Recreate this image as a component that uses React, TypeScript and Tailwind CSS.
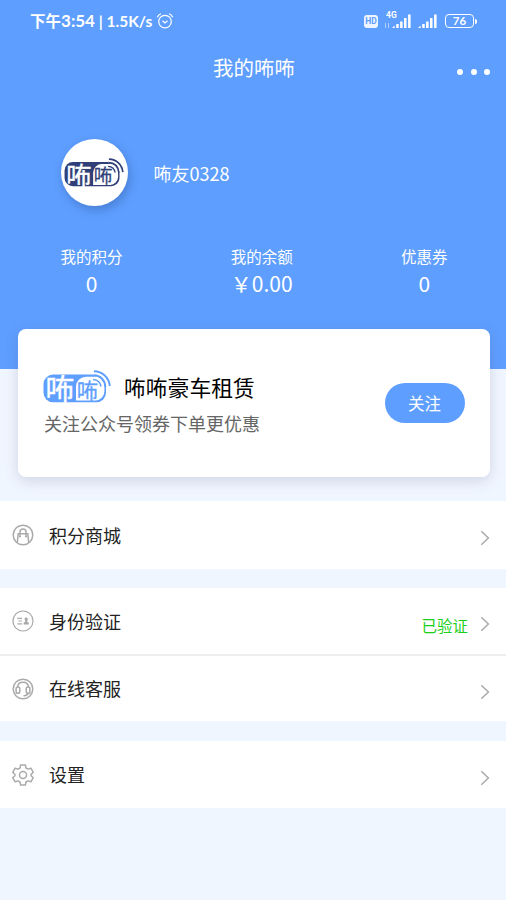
import type { ReactNode } from 'react'

import { clsx } from 'clsx'

type LogoProps = {
  color: string
  className?: string
}

const Logo = ({ color, className }: LogoProps) => (
  <svg viewBox="0 0 68 33" className={clsx('overflow-visible', className)} fill="none">
    <rect x="0.5" y="4.6" width="62.5" height="27.6" rx="9.5" fill={color} />
    <path
      d="M43 6.8H52.5A9.5 9.5 0 0 1 61.4 15.5V21.5A9.5 9.5 0 0 1 52.5 30.6H33V16.5A10 10 0 0 1 43 6.8Z"
      fill="#fff"
    />
    <path d="M50 0H68V17H63.8L50 4.5Z" fill="#fff" />
    <g stroke={color} strokeWidth="1.9">
      <path d="M51 1.2C59.5 1.4 66 7.5 66.8 16" />
      <path d="M50.5 5.3C57.5 5.6 61.7 9.8 62.4 17" />
      <path d="M50 9.6C54.5 9.9 57.3 12.5 58 16.5" strokeWidth="1.5" />
    </g>
    <g className="font-['Noto_Sans_CJK_SC',sans-serif]">
      <text x="2.5" y="30.2" fontSize="29" fill="#fff" stroke="#fff" strokeWidth="0.5">
        咘
      </text>
      <text x="33.8" y="28.8" fontSize="21.5" fill={color} stroke={color} strokeWidth="0.3">
        咘
      </text>
    </g>
  </svg>
)

const AlarmIcon = () => (
  <svg viewBox="0 0 18 18" className="size-[18px]" fill="none" stroke="currentColor" strokeWidth="1.2">
    <circle cx="9" cy="9.6" r="6.3" />
    <path d="M6.5 8.8L9 11L11.5 8.8M1.3 5.2C2 3.5 3.2 2.4 4.9 1.8M16.7 5.2C16 3.5 14.8 2.4 13.1 1.8" />
  </svg>
)

const SignalIcon = ({ className }: { className?: string }) => (
  <svg viewBox="0 0 20 14" className={className} fill="currentColor">
    <path d="M0 14L2.6 11.4V14ZM4.2 10H6.7V14H4.2ZM8.1 7.5H10.6V14H8.1ZM12 4H14.5V14H12ZM16.1 0.5H18.6V14H16.1Z" />
  </svg>
)

const StatusBar = () => (
  <div className="flex h-[42px] items-center justify-between pr-[29px] pl-[30px]">
    <div className="flex items-center">
      <span className="w-[125px] whitespace-nowrap font-['Lato','Noto_Sans_CJK_SC',sans-serif] font-bold text-[15.5px]">
        下午<span className="text-[17px]">3:54</span> | 1.5K/s
      </span>
      <span className="ml-px">
        <AlarmIcon />
      </span>
    </div>
    <div className="flex items-center">
      <span className="mr-[7px] flex h-[13px] w-[14px] items-center justify-center rounded-[3px] bg-white/90 font-['Roboto',sans-serif] font-bold text-[#5e9efe] text-[8.5px]">
        HD
      </span>
      <span className="relative mr-[6px] flex h-[14px] w-[27px] justify-end">
        <span className="-top-[3px] absolute left-[1px] font-['Roboto',sans-serif] font-bold text-[8.5px] leading-[9px]">
          4G
        </span>
        <span className="absolute bottom-0 left-0 h-[5px] w-[4px] border-white/50 border-x" />
        <SignalIcon className="h-[14px] w-[20px]" />
      </span>
      <SignalIcon className="mr-[7px] h-[14px] w-[20px]" />
      <span className="flex h-[14px] w-[29px] items-center justify-center rounded-[4px] border-[1.5px] border-white font-['Lato',sans-serif] font-bold text-[11.5px]">
        76
      </span>
      <span className="ml-[1px] h-[5px] w-[2px] rounded-r-full bg-white" />
    </div>
  </div>
)

const stats = [
  { label: '我的积分', value: '0' },
  { label: '我的余额', value: '￥0.00' },
  { label: '优惠券', value: '0' },
]

const Header = () => (
  <header className="h-[369px] bg-[#5e9efe] text-white">
    <StatusBar />
    <div className="grid h-[50px] grid-cols-[1fr_auto_1fr] items-center pl-[2px]">
      <h1 className="col-start-2 text-[20.5px]">我的咘咘</h1>
      <div className="mt-[9px] mr-[16px] flex gap-[7.5px] justify-self-end">
        <span className="size-[6px] rounded-full bg-white" />
        <span className="size-[6px] rounded-full bg-white" />
        <span className="size-[6px] rounded-full bg-white" />
      </div>
    </div>
    <div className="mt-[47px] flex h-[68px] items-center pl-[60.5px]">
      <div className="mb-px flex size-[67px] items-center justify-center rounded-full bg-white shadow-[2px_4px_10px_rgba(40,80,150,0.4)]">
        <Logo color="#303f78" className="h-[29px] w-[60px]" />
      </div>
      <span className="ml-[26px] text-[18px]">咘友0328</span>
    </div>
    <div className="mt-[38px] flex justify-between pr-[58.5px] pl-[60.5px]">
      {stats.map(({ label, value }) => (
        <div key={label} className="flex flex-col items-center whitespace-nowrap">
          <span className="text-[15.5px] leading-[22px]">{label}</span>
          <span className="mt-[1px] text-[21px] leading-[31px]">{value}</span>
        </div>
      ))}
    </div>
  </header>
)

const FollowCard = () => (
  <section className="relative mx-[18px] mt-[-40px] mr-[16px] flex h-[148px] items-center justify-between rounded-[8px] bg-white pr-[25.5px] pl-[25px] shadow-[0_4px_14px_rgba(90,80,130,0.2)]">
    <div>
      <div className="flex items-center">
        <Logo color="#5e9efe" className="h-[33px] w-[68px]" />
        <h2 className="ml-[13px] text-[21.8px] text-black leading-[34px]">咘咘豪车租赁</h2>
      </div>
      <p className="mt-[5px] pl-px text-[#666] text-[18px] leading-[28px]">关注公众号领券下单更优惠</p>
    </div>
    <button
      type="button"
      className="h-[40px] w-[80px] rounded-full bg-[#5e9efe] text-[16.5px] text-white"
    >
      关注
    </button>
  </section>
)

const BagIcon = () => (
  <>
    <circle cx="11" cy="11" r="9.8" />
    <path d="M5.3 18.8L6.2 9.8H15.8L16.7 18.8M8 12V8A3 3 0 0 1 14 8V12" />
    <path d="M8 12V13.2M14 12V13.2" strokeWidth="2" />
  </>
)

const IdIcon = () => (
  <>
    <circle cx="11" cy="11" r="10" strokeWidth="1.2" />
    <path d="M5.3 8.3H10M6.3 11H10M5.3 13.8H10" strokeWidth="1.2" />
    <path
      d="M11.6 14.6V12.8L13.4 11.6L12.5 9.2C12.5 6.9 15.9 6.9 15.9 9.2L15 11.6L16.8 12.8V14.6Z"
      fill="currentColor"
      stroke="none"
    />
  </>
)

const HeadsetIcon = () => (
  <>
    <circle cx="11" cy="11" r="9.8" />
    <path d="M5.5 9C6.2 2.7 15.8 2.7 16.5 9M16.5 15C16 17 14.4 17.6 11.5 17.7" />
    <rect x="4.1" y="8.9" width="3.7" height="6.4" rx="1.8" />
    <rect x="14.2" y="8.9" width="3.7" height="6.4" rx="1.8" />
  </>
)

const GearIcon = () => (
  <>
    <path
      d="M8.6 1H13.4L14 4L16 5.1L18.9 4.2L21.3 8.3L19.1 10.2V11.8L21.3 13.7L18.9 17.8L16 16.9L14 18L13.4 21H8.6L8 18L6 16.9L3.1 17.8L0.7 13.7L2.9 11.8V10.2L0.7 8.3L3.1 4.2L6 5.1L8 4Z"
      strokeLinejoin="round"
    />
    <circle cx="11" cy="11" r="3.5" />
  </>
)

type RowProps = {
  label: string
  icon: ReactNode
  status?: string
  className?: string
}

const Row = ({ label, icon, status, className }: RowProps) => (
  <div className={clsx('flex items-center bg-white pr-[16px] pl-[12.4px]', className)}>
    <svg
      viewBox="0 0 22 22"
      className="size-[22px] text-[#aaa]"
      fill="none"
      stroke="currentColor"
      strokeWidth="1.5"
    >
      {icon}
    </svg>
    <span className="ml-[14.6px] text-[#222] text-[18px]">{label}</span>
    <div className="mt-[6px] ml-auto flex items-center">
      {status && (
        <span className="mt-px mr-[12px] text-[#1bd01b] text-[15.5px] leading-[20px]">{status}</span>
      )}
      <svg viewBox="0 0 10 16" className="h-[16px] w-[10px]" fill="none" stroke="#aaa" strokeWidth="1.5">
        <path d="M1.3 1.2L8.4 8L1.3 14.8" />
      </svg>
    </div>
  </div>
)

export default function App() {
  return (
    <main className="h-[900px] w-[506px] overflow-hidden bg-[#f0f6ff] font-['Noto_Sans_CJK_SC',sans-serif]">
      <Header />
      <FollowCard />
      <div className="mt-[24px] flex flex-col">
        <Row label="积分商城" icon={<BagIcon />} className="h-[68px]" />
        <Row label="身份验证" icon={<IdIcon />} status="已验证" className="mt-[19px] h-[66px]" />
        <Row label="在线客服" icon={<HeadsetIcon />} className="h-[67px] border-[#eee] border-t-2" />
        <Row label="设置" icon={<GearIcon />} className="mt-[20px] h-[67px]" />
      </div>
    </main>
  )
}
